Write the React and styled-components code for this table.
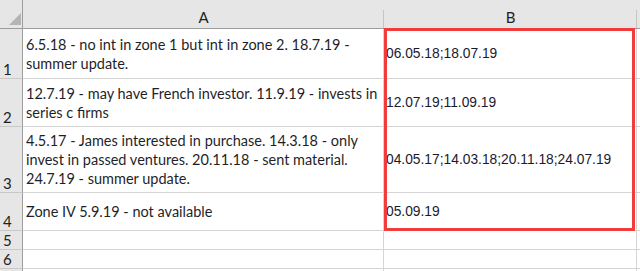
import React from "react";
import styled, { createGlobalStyle } from "styled-components";

const Global = createGlobalStyle`
  html, body {
    margin: 0;
    padding: 0;
    background: #fff;
  }
  body {
    width: 640px;
    height: 271px;
    overflow: hidden;
  }
`;

const rows = [
  {
    n: 1,
    h: 50,
    a: ["6.5.18 - no int in zone 1 but int in zone 2. 18.7.19 -", "summer update."],
    b: "06.05.18;18.07.19",
  },
  {
    n: 2,
    h: 48,
    a: ["12.7.19 - may have French investor. 11.9.19 - invests in", "series c firms"],
    b: "12.07.19;11.09.19",
  },
  {
    n: 3,
    h: 66,
    a: [
      "4.5.17 - James interested in purchase. 14.3.18 - only",
      "invest in passed ventures. 20.11.18 - sent material.",
      "24.7.19 - summer update.",
    ],
    b: "04.05.17;14.03.18;20.11.18;24.07.19",
  },
  { n: 4, h: 38, a: ["Zone IV 5.9.19 - not available"], b: "05.09.19" },
  { n: 5, h: 19, a: [], b: "" },
  { n: 6, h: 19, a: [], b: "" },
  // row 7 only peeks in at the bottom edge, its number sits below the fold
  { n: "", h: 19, a: [], b: "" },
];

const App = () => {
  return (
    <>
      <Global />
      <Sheet>
        <Corner>
          <Triangle />
        </Corner>
        <ColHead>A</ColHead>
        <ColHead>B</ColHead>
        <ColHead />
        {rows.map((r, i) => (
          <React.Fragment key={i}>
            <RowHead $h={r.h}>{r.n}</RowHead>
            <Cell $h={r.h}>
              {r.a.map((line, j) => (
                <Line key={j}>{line}</Line>
              ))}
            </Cell>
            <DateCell $h={r.h}>{r.b}</DateCell>
            <Cell $h={r.h} />
          </React.Fragment>
        ))}
        <Selection />
      </Sheet>
    </>
  );
};

const Sheet = styled.div`
  position: relative;
  display: grid;
  grid-template-columns: 23px 361px 253px 20px;
  width: 640px;
  height: 271px;
  overflow: hidden;
  font-family: Lato, "Noto Sans", sans-serif;
  color: #1f1f2a;
`;

const Corner = styled.div`
  height: 28px;
  background: #e6e6e6;
  border-bottom: 1px solid #9c9c9c;
  border-right: 1px solid #9c9c9c;
  box-sizing: content-box;
  width: 22px;
  position: relative;
`;

const Triangle = styled.div`
  position: absolute;
  right: 1px;
  bottom: 3px;
  width: 0;
  height: 0;
  border-left: 12px solid transparent;
  border-bottom: 12px solid #b4b4b4;
`;

const ColHead = styled.div`
  position: relative;
  height: 28px;
  background: #e6e6e6;
  border-bottom: 1px solid #9c9c9c;
  display: flex;
  align-items: flex-end;
  justify-content: center;
  font-size: 15px;
  line-height: 22px;
  color: #222;
  &::after {
    content: "";
    position: absolute;
    right: 0;
    top: 10px;
    bottom: 0;
    width: 1px;
    background: #c4c4c4;
  }
`;

const RowHead = styled.div`
  height: ${(p) => p.$h - 1}px;
  background: #e6e6e6;
  border-bottom: 1px solid #c8c8c8;
  border-right: 1px solid #9c9c9c;
  display: flex;
  align-items: flex-end;
  padding-left: 3px;
  font-size: 15px;
  line-height: 18px;
  color: #222;
`;

const Cell = styled.div`
  height: ${(p) => p.$h - 1}px;
  border-bottom: 1px solid #d4d4d4;
  border-right: 1px solid #d4d4d4;
  display: flex;
  flex-direction: column;
  justify-content: center;
  padding-left: 3px;
  font-size: 14.5px;
  line-height: 19px;
  white-space: nowrap;
  overflow: hidden;
`;

const Line = styled.span`
  display: block;
`;

const DateCell = styled(Cell)`
  padding-left: 2px;
  font-family: "Liberation Sans", Arial, sans-serif;
  font-size: 13.8px;
  color: #1a1a2e;
`;

const Selection = styled.div`
  position: absolute;
  left: 384px;
  top: 28px;
  width: 251px;
  height: 203px;
  box-sizing: border-box;
  border: 3px solid #f23b3b;
  pointer-events: none;
`;

export default App;
